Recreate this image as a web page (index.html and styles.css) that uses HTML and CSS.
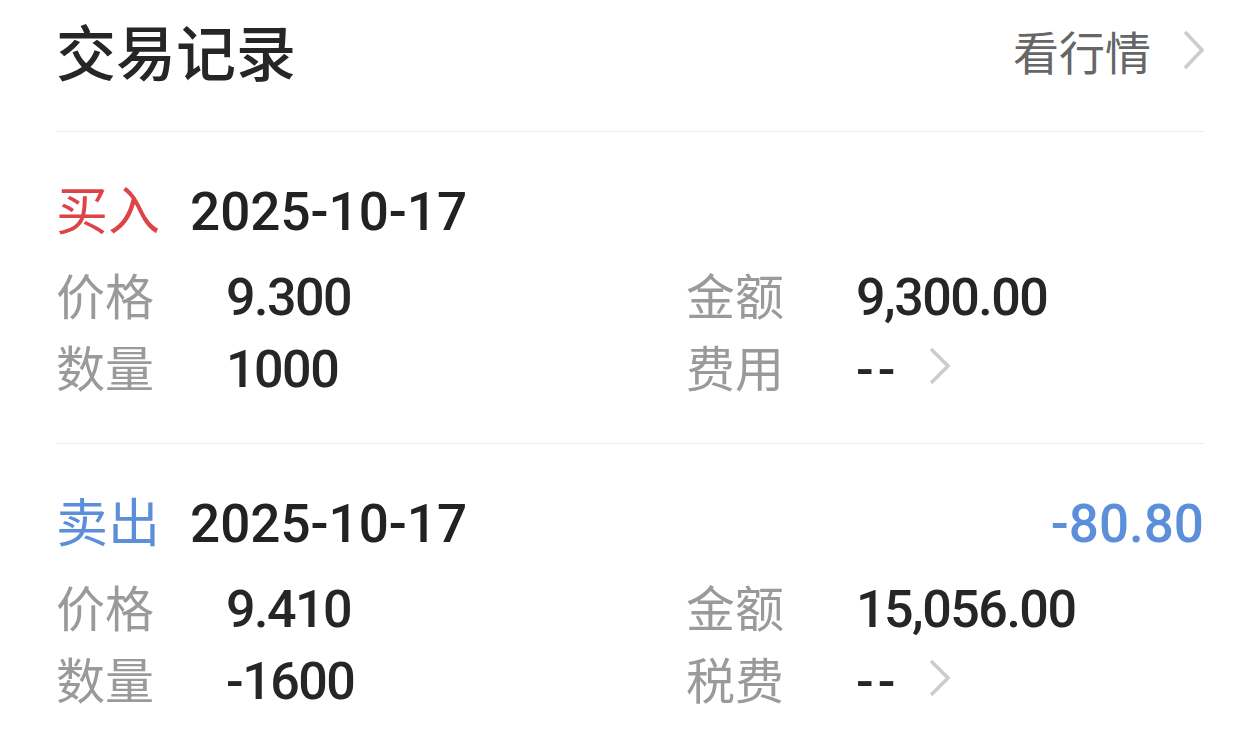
FILE: index.html
```html
<!DOCTYPE html>
<html>

  <head>
    <meta charset="UTF-8">
    <title>交易记录</title>
    <link rel="stylesheet" href="styles.css">
  </head>

  <body>
    <div id="page">
      <div class="top">
        <h1 class="title">交易记录</h1>
        <a class="more" href="#">
          <span>看行情</span>
          <svg class="arrow" width="21" height="40" viewBox="0 0 21 40">
            <polyline points="2,2 19,20 2,38" />
          </svg>
        </a>
      </div>

      <div class="record">
        <div class="head">
          <span class="type buy">买入</span>
          <span class="date">2025-10-17</span>
        </div>
        <div class="grid">
          <div class="cell left">
            <span class="label">价格</span>
            <span class="value">9.300</span>
          </div>
          <div class="cell">
            <span class="label">金额</span>
            <span class="value">9,300.00</span>
          </div>
          <div class="cell left">
            <span class="label">数量</span>
            <span class="value">1000</span>
          </div>
          <div class="cell">
            <span class="label">费用</span>
            <span class="value dash">--</span>
            <svg class="arrow small" width="21" height="38" viewBox="0 0 21 38">
              <polyline points="2,2 19,19 2,36" />
            </svg>
          </div>
        </div>
      </div>

      <div class="record">
        <div class="head">
          <span class="type sell">卖出</span>
          <span class="date">2025-10-17</span>
          <span class="profit">-80.80</span>
        </div>
        <div class="grid">
          <div class="cell left">
            <span class="label">价格</span>
            <span class="value">9.410</span>
          </div>
          <div class="cell">
            <span class="label">金额</span>
            <span class="value">15,056.00</span>
          </div>
          <div class="cell left">
            <span class="label">数量</span>
            <span class="value">-1600</span>
          </div>
          <div class="cell">
            <span class="label">税费</span>
            <span class="value dash">--</span>
            <svg class="arrow small" width="21" height="38" viewBox="0 0 21 38">
              <polyline points="2,2 19,19 2,36" />
            </svg>
          </div>
        </div>
      </div>
    </div>
  </body>

</html>
```

FILE: styles.css
```css
* {
  margin: 0;
  padding: 0;
  box-sizing: border-box;
}

body {
  background: #ffffff;
  font-family: "Noto Sans CJK SC", "Noto Sans", sans-serif;
  color: #222222;
}

#page {
  padding: 0 56px;
}

/* 顶部标题栏 */
.top {
  display: flex;
  justify-content: space-between;
  align-items: center;
  height: 131px;
  padding-bottom: 31px;
}

.title {
  font-size: 60px;
  font-weight: 500;
  line-height: 1;
  color: #262626;
}

.more {
  display: flex;
  align-items: center;
  text-decoration: none;
  color: #666666;
  font-size: 46px;
  line-height: 1;
}

.more span {
  margin-right: 32px;
}

.arrow polyline {
  fill: none;
  stroke: #cccccc;
  stroke-width: 3.5;
}

/* 每一条记录 */
.record {
  border-top: 1px solid #ececec;
  padding: 40px 0 41px;
}

.head {
  display: flex;
  align-items: baseline;
  height: 72px;
  line-height: 72px;
}

.type {
  font-size: 52px;
}

.buy {
  color: #dd4448;
}

.sell {
  color: #5b8fda;
}

.date,
.value,
.profit {
  font-family: Roboto, "Noto Sans", sans-serif;
  font-weight: 500;
  font-size: 53px;
}

.date {
  margin-left: 30px;
}

.profit {
  margin-left: auto;
  color: #5b8fda;
}

.grid {
  display: grid;
  grid-template-columns: 630px 1fr;
  margin-top: 14px;
}

.cell {
  display: flex;
  align-items: baseline;
  height: 72px;
  line-height: 72px;
}

.label {
  width: 170px;
  font-size: 49px;
  color: #9a9a9a;
}

.value {
  font-size: 52px;
  letter-spacing: -1.5px;
  color: #262626;
}

.dash {
  letter-spacing: 4px;
}

.arrow.small {
  align-self: center;
  margin-left: 30px;
}
```
